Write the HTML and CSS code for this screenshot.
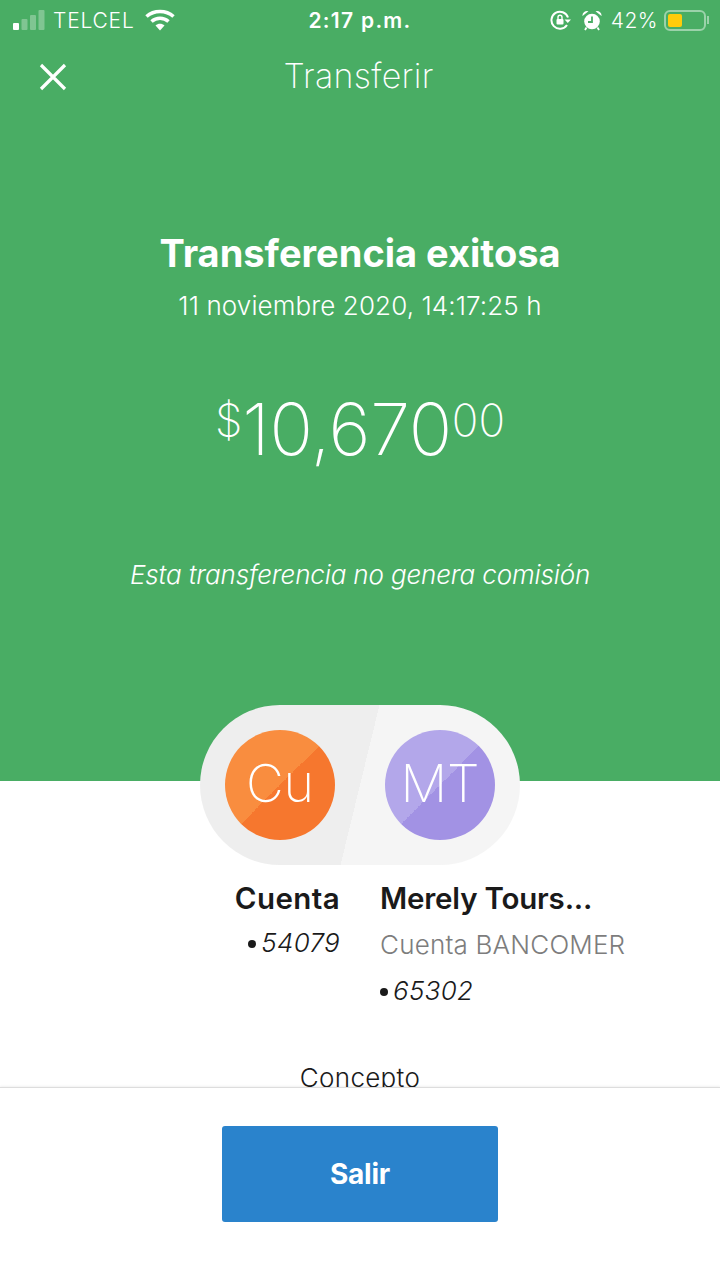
FILE: index.html
```html
<!DOCTYPE html>
<html lang="es">
<head>
    <meta charset="UTF-8">
    <meta name="viewport" content="width=device-width, initial-scale=1.0">
    <title>Transferir</title>
    <link rel="stylesheet" href="styles.css">
</head>
<body>

    <div class="page">
        <div class="content">
            <section class="hero">
                <div class="status-bar">
                    <div class="status-left">
                        <svg class="signal" width="32" height="20" viewBox="0 0 32 20">
                            <rect x="0" y="13" width="6" height="7" rx="1" fill="#fff"/>
                            <rect x="8.500" y="9" width="6" height="11" rx="1" fill="#fff" opacity=".3"/>
                            <rect x="17" y="5" width="6" height="15" rx="1" fill="#fff" opacity=".3"/>
                            <rect x="25.500" y="0" width="6" height="20" rx="1" fill="#fff" opacity=".3"/>
                        </svg>
                        <span>TELCEL</span>
                        <svg class="wifi" width="30" height="22" viewBox="0 0 30 22">
                            <path d="M1.500 7.500C9 .8 21 .8 28.500 7.500" fill="none" stroke="#fff" stroke-width="3.600"/>
                            <path d="M6.500 12.500C11.500 8.200 18.500 8.200 23.500 12.500" fill="none" stroke="#fff" stroke-width="3.600"/>
                            <path d="M10.500 16.500C13 14 17 14 19.500 16.500L15 21.500Z" fill="#fff"/>
                        </svg>
                    </div>
                    <div class="status-time">2:17 p.m.</div>
                    <div class="status-right">
                        <svg class="rotation" width="21" height="20" viewBox="0 0 21 20">
                            <path d="M18 7.500A8.500 8.500 0 1 0 17 15" fill="none" stroke="#fff" stroke-width="2"/>
                            <path d="M14.500 9.500L21 9.500L17.800 13Z" fill="#fff"/>
                            <rect x="6.500" y="9" width="7" height="5.500" rx="1" fill="#fff"/>
                            <path d="M8 9.500V7.300a2 2 0 0 1 4 0V9.500" fill="none" stroke="#fff" stroke-width="1.400"/>
                        </svg>
                        <svg class="alarm" width="20" height="21" viewBox="0 0 20 21">
                            <circle cx="10" cy="11.500" r="7.800" fill="#fff"/>
                            <path d="M.5 6A4.500 4.500 0 0 1 6.500 1.200ZM19.500 6A4.500 4.500 0 0 0 13.500 1.200Z" fill="#fff"/>
                            <path d="M10 6.500V12H6" fill="none" stroke="#4aae65" stroke-width="1.800"/>
                            <path d="M4.500 17.500L3 20M15.500 17.500L17 20" stroke="#fff" stroke-width="1.800"/>
                        </svg>
                        <span>42%</span>
                        <div class="battery"><div class="battery-level"></div></div>
                        <div class="battery-tip"></div>
                    </div>
                </div>

                <header class="nav">
                    <svg class="close-icon" width="28" height="28" viewBox="0 0 28 28">
                        <path d="M2 2L26 26M26 2L2 26" stroke="#fff" stroke-width="3.200" fill="none"/>
                    </svg>
                    <h2>Transferir</h2>
                </header>

                <h1>Transferencia exitosa</h1>
                <p class="date">11 noviembre 2020, 14:17:25 h</p>
                <div class="amount"><sup>$</sup>10,670<sup>00</sup></div>
                <p class="note">Esta transferencia no genera comisión</p>
            </section>

            <div class="pill">
                <div class="avatar avatar-orange">Cu</div>
                <div class="avatar avatar-purple">MT</div>
            </div>

            <div class="accounts">
                <div class="account account-from">
                    <div class="account-name">Cuenta</div>
                    <div class="account-number"><span class="dot"></span>54079</div>
                </div>
                <div class="account">
                    <div class="account-name">Merely Tours...</div>
                    <div class="account-bank">Cuenta BANCOMER</div>
                    <div class="account-number"><span class="dot"></span>65302</div>
                </div>
            </div>

            <div class="concept">Concepto</div>
        </div>

        <footer class="bottom-bar">
            <button class="exit-btn">Salir</button>
        </footer>
    </div>

</body>
</html>
```

FILE: styles.css
```css
* {
    box-sizing: border-box;
}
body {
    margin: 0;
    font-family: Inter, "Open Sans", sans-serif;
    background-color: white;
    color: #1a1a1a;
}
.page {
    width: 720px;
    height: 1280px;
    display: flex;
    flex-direction: column;
    overflow: hidden;
}
.content {
    height: 1087px;
    overflow: hidden;
}
.hero {
    height: 781px;
    background-color: #49ad64;
    color: white;
    text-align: center;
}
.status-bar {
    height: 40px;
    padding: 0 11px 0 13px;
    display: flex;
    align-items: center;
    justify-content: space-between;
    font-size: 21px;
    font-weight: 300;
    position: relative;
}
.status-left, .status-right {
    display: flex;
    align-items: center;
}
.status-left span {
    margin-left: 8px;
    margin-right: 10px;
    letter-spacing: .8px;
}
.status-time {
    position: absolute;
    left: 0;
    right: 0;
    text-align: center;
    font-weight: 600;
    letter-spacing: 1.300px;
}
.alarm {
    margin-left: 11px;
}
.status-right span {
    margin-left: 9px;
    margin-right: 6px;
    letter-spacing: .5px;
}
.battery {
    width: 42px;
    height: 21px;
    border: 2px solid rgba(255, 255, 255, .45);
    border-radius: 6px;
    padding: 2px;
}
.battery-level {
    width: 14px;
    height: 100%;
    background-color: #ffcc0a;
    border-radius: 2px;
}
.battery-tip {
    width: 2px;
    height: 8px;
    margin-left: 1px;
    background-color: rgba(255, 255, 255, .45);
}
.nav {
    height: 73px;
    position: relative;
}
.nav h2 {
    margin: 0;
    padding: 13px 3px 0 0;
    font-size: 34px;
    line-height: 46px;
    font-weight: 200;
    letter-spacing: .3px;
}
.close-icon {
    position: absolute;
    left: 39px;
    top: 23px;
}
h1 {
    margin: 0;
    padding-top: 116px;
    font-size: 38px;
    line-height: 48px;
    font-weight: 700;
}
.date {
    margin: 13px 0 0;
    font-size: 26px;
    line-height: 32px;
    font-weight: 300;
    letter-spacing: .1px;
}
.amount {
    margin-top: 62px;
    font-size: 72px;
    line-height: 90px;
    font-weight: 250;
    letter-spacing: -.3px;
}
.amount sup {
    font-size: 44px;
    line-height: 0;
    vertical-align: 19px;
    letter-spacing: 0;
}
.note {
    margin: 84px 0 0;
    font-size: 26px;
    line-height: 34px;
    font-style: italic;
    font-weight: 300;
    letter-spacing: -.15px;
}
.pill {
    width: 320px;
    height: 160px;
    margin: -76px auto 0;
    padding: 25px;
    border-radius: 80px;
    display: flex;
    justify-content: space-between;
    position: relative;
    background: linear-gradient(103.700deg, #eeeeee 50%, #f5f5f5 50%);
}
.avatar {
    width: 110px;
    height: 110px;
    border-radius: 50%;
    display: flex;
    align-items: center;
    justify-content: center;
    color: white;
    font-size: 52px;
    font-weight: 200;
    padding-bottom: 4px;
}
.avatar-orange {
    background: linear-gradient(135deg, #f98d3f 50%, #f6772e 50%);
}
.avatar-purple {
    background: linear-gradient(135deg, #b3a7ea 50%, #a292e4 50%);
}
.accounts {
    display: grid;
    grid-template-columns: 1fr 1fr;
    column-gap: 40px;
    margin-top: 12px;
}
.account-from {
    text-align: right;
}
.account-name {
    font-size: 29.500px;
    line-height: 42px;
    font-weight: 600;
    letter-spacing: -.2px;
}
.account-from .account-name {
    letter-spacing: .4px;
}
.account-bank {
    margin-top: 6px;
    font-size: 26px;
    line-height: 40px;
    font-weight: 300;
    color: #7d7d7d;
    letter-spacing: .2px;
}
.account-number {
    margin-top: 4px;
    font-size: 26px;
    line-height: 40px;
    font-style: italic;
    font-weight: 300;
    letter-spacing: .3px;
}
.account-bank + .account-number {
    margin-top: 6px;
}
.dot {
    display: inline-block;
    width: 8px;
    height: 8px;
    margin-right: 5px;
    border-radius: 50%;
    background-color: #1a1a1a;
    vertical-align: 4px;
}
.concept {
    margin-top: 50px;
    text-align: center;
    font-size: 26px;
    line-height: 34px;
    font-weight: 300;
    letter-spacing: .3px;
}
.bottom-bar {
    flex: 1;
    display: flex;
    justify-content: center;
    padding-top: 38px;
    border-top: 1px solid #dddddd;
    box-shadow: 0 -1px 2px rgba(0, 0, 0, .06);
    background-color: white;
    position: relative;
}
.exit-btn {
    width: 276px;
    height: 96px;
    padding-bottom: 2px;
    background-color: #2a83cc;
    color: white;
    font-family: inherit;
    font-size: 28px;
    font-weight: 700;
    border: none;
    border-radius: 3px;
    letter-spacing: -.2px;
}
```
